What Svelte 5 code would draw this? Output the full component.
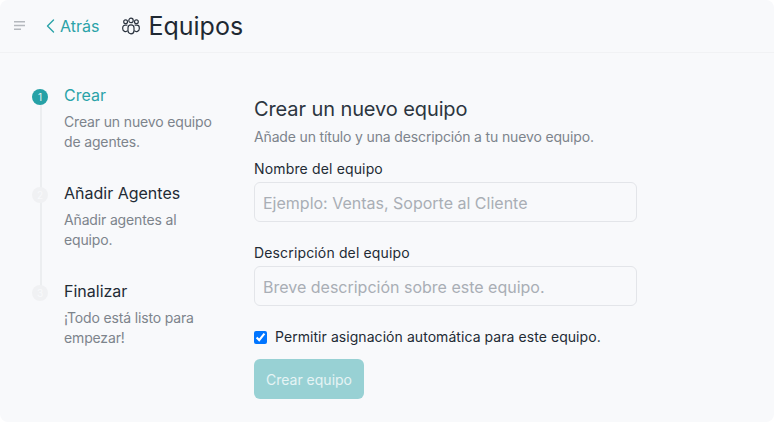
<script lang="ts">
	const steps = [
		{ n: 1, title: 'Crear', body: 'Crear un nuevo equipo de agentes.', active: true },
		{ n: 2, title: 'Añadir Agentes', body: 'Añadir agentes al equipo.', active: false },
		{ n: 3, title: 'Finalizar', body: '¡Todo está listo para empezar!', active: false }
	];
</script>

<div class="page">
	<header class="top">
		<svg class="menu" width="14" height="14" viewBox="0 0 14 14" fill="none" stroke="#b4b8bd" stroke-width="1.6">
			<path d="M1 2.8h11M1 6.5h11M1 10.2h7" />
		</svg>
		<span class="back">
			<svg width="11" height="16" viewBox="0 0 11 16" fill="none" stroke="#2aa3a8" stroke-width="1.4" stroke-linecap="round" stroke-linejoin="round">
				<path d="M8.5 2 2.5 8l6 6" />
			</svg>
			Atrás
		</span>
		<svg class="people" width="20" height="20" viewBox="0 0 20 20" fill="none" stroke="#2c3540" stroke-width="1.2">
			<circle cx="10" cy="4.4" r="2.2" />
			<circle cx="4.6" cy="5.8" r="1.9" />
			<circle cx="15.4" cy="5.8" r="1.9" />
			<rect x="7" y="8.8" width="6" height="9" rx="3" />
			<path d="M6.4 9.2H4.2a2.5 2.5 0 0 0-2.5 2.5v1a2.9 2.9 0 0 0 5 2M13.6 9.2h2.2a2.5 2.5 0 0 1 2.5 2.5v1a2.9 2.9 0 0 1-5 2" />
		</svg>
		<h1>Equipos</h1>
	</header>

	<main class="body">
		<ol class="steps">
			{#each steps as step, i (step.n)}
				<li class="step" class:active={step.active} class:last={i === steps.length - 1}>
					<span class="dot">{step.n}</span>
					<h3>{step.title}</h3>
					<p>{step.body}</p>
				</li>
			{/each}
		</ol>

		<form class="form">
			<h2>Crear un nuevo equipo</h2>
			<p class="sub">Añade un título y una descripción a tu nuevo equipo.</p>
			<label class="field">
				<span>Nombre del equipo</span>
				<input type="text" placeholder="Ejemplo: Ventas, Soporte al Cliente" />
			</label>
			<label class="field">
				<span>Descripción del equipo</span>
				<input type="text" placeholder="Breve descripción sobre este equipo." />
			</label>
			<label class="check">
				<input type="checkbox" checked />
				<span>Permitir asignación automática para este equipo.</span>
			</label>
			<button type="button" disabled>Crear equipo</button>
		</form>
	</main>
</div>

<style>
	:global(body) {
		background: #fff;
	}

	.page {
		width: 774px;
		height: 422px;
		overflow: hidden;
		border-radius: 8px;
		background: #f8f9fb;
		font-family: Inter, 'Noto Sans', sans-serif;
		color: #2c3540;
	}

	.top {
		display: flex;
		align-items: center;
		height: 52px;
		padding-left: 13px;
		border-bottom: 1px solid #f1f2f4;
	}

	.menu {
		margin-right: 18px;
	}

	.back {
		display: flex;
		align-items: center;
		gap: 4px;
		font-size: 16px;
		color: #2aa3a8;
		margin-right: 22px;
	}

	.people {
		margin-right: 7px;
	}

	h1 {
		margin: 0;
		font-size: 25px;
		font-weight: 400;
		color: #1f2933;
	}

	.body {
		display: flex;
		padding-top: 29px;
		padding-left: 32px;
	}

	.steps {
		list-style: none;
		margin: 0;
		padding: 0;
		width: 222px;
	}

	.step {
		position: relative;
		height: 98px;
		padding-left: 32px;
		box-sizing: border-box;
	}

	.step::before {
		content: '';
		position: absolute;
		left: 8px;
		top: 14px;
		bottom: -8px;
		width: 2px;
		background: #eceef0;
	}

	.step.last::before {
		display: none;
	}

	.dot {
		position: absolute;
		left: 0;
		top: 7px;
		width: 16px;
		height: 16px;
		border-radius: 50%;
		background: #f0f1f3;
		color: #f8f9fb;
		font-size: 10px;
		line-height: 16px;
		text-align: center;
	}

	.active .dot {
		background: #26a1a6;
		color: #eaf6f6;
	}

	h3 {
		margin: 0;
		font-size: 16px;
		line-height: 26px;
		font-weight: 400;
		color: #232b35;
	}

	.active h3 {
		color: #2aa3a8;
	}

	.step p {
		margin: 4px 0 0;
		font-size: 14px;
		line-height: 20px;
		width: 160px;
		letter-spacing: -0.15px;
		color: #7d848c;
	}

	.form {
		width: 383px;
		padding-top: 13px;
	}

	h2 {
		margin: 0;
		font-size: 20px;
		line-height: 28px;
		font-weight: 400;
		letter-spacing: -0.1px;
		color: #2c3540;
	}

	.sub {
		margin: 4px 0 0;
		font-size: 14px;
		line-height: 20px;
		letter-spacing: -0.15px;
		color: #7d848c;
	}

	.field {
		display: block;
		margin-bottom: 21px;
	}

	.sub + .field {
		margin-top: 12px;
	}

	.field span {
		display: block;
		font-size: 14px;
		line-height: 20px;
		letter-spacing: 0.15px;
		color: #232b35;
		margin-bottom: 3px;
	}

	.field input {
		display: block;
		box-sizing: border-box;
		width: 100%;
		height: 40px;
		padding: 1px 8px 0;
		border: 1px solid #e3e5e9;
		border-radius: 6px;
		background: #f8f9fb;
		font: inherit;
		font-size: 16px;
		color: #2c3540;
		outline: none;
	}

	.field input::placeholder {
		color: #a9aeb5;
		opacity: 1;
	}

	.check {
		display: flex;
		align-items: center;
		gap: 8px;
		font-size: 14px;
		line-height: 20px;
		letter-spacing: 0.06px;
		color: #232b35;
	}

	.check input {
		margin: 0;
		width: 13px;
		height: 13px;
	}

	button {
		display: block;
		margin-top: 12px;
		height: 40px;
		width: 110px;
		border: 0;
		border-radius: 6px;
		background: #98d1d4;
		color: #e6f4f5;
		font: inherit;
		font-size: 14px;
	}
</style>
